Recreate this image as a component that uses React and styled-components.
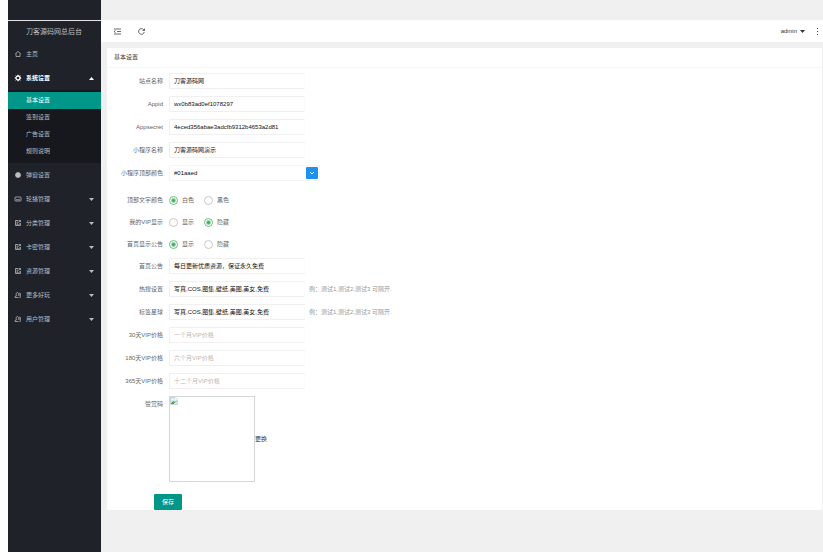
import React, { useState } from "react";
import styled, { createGlobalStyle, css } from "styled-components";

const GlobalStyle = createGlobalStyle`
  *, *::before, *::after { box-sizing: border-box; }
  body {
    margin: 0;
    background: #fff;
    color: #333;
    font: 6px/16px "Liberation Sans", "Noto Sans CJK SC", sans-serif;
  }
  button, input { font: inherit; color: inherit; }
  ul { margin: 0; padding: 0; list-style: none; }
`;

const Page = styled.div`
  display: flex;
  min-height: 100vh;
  padding-left: 8px;
`;

const Sidebar = styled.aside`
  flex: 0 0 93px;
  background: #20222a;
  color: #bcbdbf;
`;

const SidebarTop = styled.div`
  height: 21px;
  border-bottom: 1px solid #e4e4e6;
`;

const Brand = styled.h1`
  margin: 0;
  padding-left: 18px;
  font-size: 7px;
  font-weight: 400;
  line-height: 21px;
`;

const NavLink = styled.a`
  display: flex;
  align-items: center;
  gap: 5px;
  height: 24px;
  padding: 0 7px;
  color: ${(p) => (p.$open ? "#fff" : "inherit")};
  font-weight: ${(p) => (p.$open ? 700 : 400)};
  text-decoration: none;
`;

const NavText = styled.span`
  flex: 1;
`;

const NavIcon = styled.svg`
  width: 6px;
  height: 6px;
  fill: none;
  stroke: currentColor;
  stroke-width: 1.5;
  overflow: visible;
`;

const Caret = styled.svg`
  width: 5px;
  height: 3px;
  fill: currentColor;
`;

const SubMenu = styled.ul`
  padding: 2px 0 3px;
  background: #17181d;
`;

const SubLink = styled.a`
  display: block;
  padding-left: 18px;
  line-height: 17px;
  color: ${(p) => (p.$active ? "#fff" : "#bcbdbf")};
  background: ${(p) => (p.$active ? "#009688" : "transparent")};
  text-decoration: none;
`;

const Main = styled.main`
  flex: 1;
  min-width: 0;
  padding-top: 20px;
  background: #f0f0f0;
`;

const Toolbar = styled.header`
  display: flex;
  align-items: center;
  gap: 17px;
  height: 22px;
  padding: 0 4px 0 13px;
  background: #fff;
`;

const ToolButton = styled.button`
  display: flex;
  align-items: center;
  gap: 3px;
  padding: 0;
  border: 0;
  background: none;
`;

const ToolIcon = styled.svg`
  width: ${(p) => p.$width || 7}px;
  height: 7px;
  fill: none;
  stroke: #444;
`;

const ActionGroup = styled.div`
  display: flex;
  align-items: center;
  gap: 11px;
  margin-left: auto;
`;

const Card = styled.section`
  margin: 6px 1px 42px 6px;
  background: #fff;
`;

const CardTitle = styled.h2`
  margin: 0;
  padding-left: 7px;
  border-bottom: 1px solid #f6f6f6;
  font-size: 6px;
  font-weight: 400;
  line-height: 19px;
`;

const Form = styled.form`
  padding-top: 5px;
`;

const Row = styled.div`
  display: flex;
  align-items: flex-start;
  gap: 6px;
  margin-bottom: ${(p) => (p.$last ? 0 : 7)}px;
`;

const RadioGroup = styled.fieldset`
  display: flex;
  gap: 6px;
  height: 16px;
  min-width: 0;
  margin: 0 0 6px;
  padding: 0;
  border: 0;
`;

const Rows = styled.div`
  padding-top: ${(p) => (p.$spaced ? 4 : 0)}px;
`;

const labelStyle = css`
  flex: 0 0 56px;
  text-align: right;
  color: #666;
  white-space: nowrap;
`;

const Label = styled.label`
  ${labelStyle}
`;

const Caption = styled.span`
  ${labelStyle}
`;

const TextInput = styled.input`
  width: 136px;
  height: 16px;
  padding: 0 4px;
  border: 1px solid #f0f0f0;
  border-right-color: #fbfbfb;
  background: #fff;
  color: #111;
  outline: 0;
  &::placeholder { color: #b8b8b8; opacity: 1; }
`;

const ColorBox = styled.div`
  display: flex;
  align-items: center;
  width: 151px;
  height: 16px;
  padding-right: 1px;
  border: 1px solid #f5f5f5;
`;

const ColorInput = styled.input`
  flex: 1;
  min-width: 0;
  height: 14px;
  padding: 0 4px;
  border: 0;
  color: #111;
  outline: 0;
`;

const ColorButton = styled.button`
  display: flex;
  align-items: center;
  justify-content: center;
  width: 12px;
  height: 12px;
  padding: 0;
  border: 0;
  border-radius: 1px;
  background: #1e90ee;
`;

const Hint = styled.span`
  margin-left: -2px;
  color: #999;
`;

const Option = styled.label`
  display: flex;
  align-items: center;
  gap: 4px;
  width: 29px;
  color: #666;
  white-space: nowrap;
`;

const Radio = styled.input`
  appearance: none;
  flex: none;
  width: 9px;
  height: 9px;
  margin: 0;
  border: 1px solid #c9c9c9;
  border-radius: 50%;
  &:checked {
    border-color: #6cc083;
    background: radial-gradient(circle, #45ad63 0 1px, #fff 3px);
  }
`;

const Preview = styled.div`
  width: 86px;
  height: 86px;
  border: 1px solid #d4d7d7;
`;

const ImageGlyph = styled.svg`
  display: block;
  width: 8px;
  height: 8px;
`;

const Upload = styled.div`
  display: flex;
  align-items: center;
`;

const PlainButton = styled.button`
  padding: 0;
  border: 0;
  background: none;
`;

const SaveButton = styled.button`
  display: block;
  width: 28px;
  height: 16px;
  margin: 12px 0 0 47px;
  padding: 0;
  border: 0;
  border-radius: 1px;
  background: #009688;
  color: #fff;
`;

const iconShapes = {
  home: <path d="M1 5 6 1l5 4M2 4.5V11h8V4.5" />,
  gear: (
    <>
      <circle cx="6" cy="6" r="4" strokeWidth="2.6" />
      <path d="M6-.5V2M6 10v2.5M-.5 6H2M10 6h2.5M1.4 1.4 3 3M9 9l1.6 1.6M10.6 1.4 9 3M3 9l-1.6 1.6" strokeWidth="2" />
    </>
  ),
  dot: <circle cx="6" cy="6" r="5" fill="currentColor" />,
  carousel: (
    <>
      <rect x="0" y="2" width="12" height="8" rx="1" />
      <path d="M2 7.5h8" />
    </>
  ),
  template: (
    <>
      <path d="M7 1H1v10h10V6M3 4h4M3 6.5h3M3 9h4" />
      <path d="M8 1h3v3M11 1 7.5 5M9 7v2" />
    </>
  ),
  user: (
    <path d="M0 11V9l3-1.5C1.500 5 2 1.500 4.500 1S8 4.500 6.500 7.500M0 11h7M8.500 2.500h2V11H9M8 6h2" />
  ),
};

const navItems = [
  { icon: "home", text: "主页" },
  {
    icon: "gear",
    text: "系统设置",
    children: ["基本设置", "签到设置", "广告设置", "规则说明"],
  },
  { icon: "dot", text: "弹窗设置" },
  { icon: "carousel", text: "轮播管理", more: true },
  { icon: "template", text: "分类管理", more: true },
  { icon: "template", text: "卡密管理", more: true },
  { icon: "template", text: "资源管理", more: true },
  { icon: "user", text: "更多好玩", more: true },
  { icon: "user", text: "用户管理", more: true },
];

function Arrow({ up }) {
  return (
    <Caret viewBox="0 0 5 3" aria-hidden="true">
      <path d={up ? "M0 3h5L2.500 0z" : "M0 0h5L2.500 3z"} />
    </Caret>
  );
}

function NavItem({ icon, text, children, more }) {
  return (
    <li>
      <NavLink href="#" $open={Boolean(children)}>
        <NavIcon viewBox="0 0 12 12" aria-hidden="true">{iconShapes[icon]}</NavIcon>
        <NavText>{text}</NavText>
        {(children || more) && <Arrow up={Boolean(children)} />}
      </NavLink>
      {children && (
        <SubMenu>
          {children.map((name, i) => (
            <li key={name}><SubLink href="#" $active={i === 0}>{name}</SubLink></li>
          ))}
        </SubMenu>
      )}
    </li>
  );
}

function Field({ id, label, value, placeholder, hint }) {
  return (
    <Row>
      <Label htmlFor={id}>{label}</Label>
      <TextInput id={id} defaultValue={value} placeholder={placeholder} />
      {hint && <Hint>{hint}</Hint>}
    </Row>
  );
}

function RadioField({ name, label, options, initial }) {
  const [selected, setSelected] = useState(initial);
  return (
    <RadioGroup aria-label={label}>
      <Caption>{label}</Caption>
      {options.map((option, i) => (
        <Option key={option}>
          <Radio
            type="radio"
            name={name}
            checked={selected === i}
            onChange={() => setSelected(i)}
          />
          {option}
        </Option>
      ))}
    </RadioGroup>
  );
}

const hint = "例：测试1,测试2,测试3 可隔开.";
const tags = "写真,COS,图集,壁纸,美图,美女,免费";

export default function App() {
  return (
    <>
      <GlobalStyle />
      <Page>
        <Sidebar>
          <SidebarTop />
          <Brand>刀客源码网总后台</Brand>
          <nav>
            <ul>{navItems.map((item) => <NavItem key={item.text} {...item} />)}</ul>
          </nav>
        </Sidebar>
        <Main>
          <Toolbar>
            <ToolButton type="button" aria-label="收起菜单">
              <ToolIcon viewBox="0 0 14 14" strokeWidth="1.6">
                <path d="M0 2h14M6 7h8M0 12h14M3 5 0 7l3 2" />
              </ToolIcon>
            </ToolButton>
            <ToolButton type="button" aria-label="刷新">
              <ToolIcon viewBox="0 0 14 14" strokeWidth="1.6">
                <path d="M12.500 8A5.700 5.700 0 1 1 11 3l2 2M13 1v4H9" />
              </ToolIcon>
            </ToolButton>
            <ActionGroup>
              <ToolButton type="button">admin <Arrow /></ToolButton>
              <ToolButton type="button" aria-label="更多">
                <ToolIcon $width={3} viewBox="0 0 3 7" strokeWidth="1">
                  <path d="M1 .5h1M1 3.500h1M1 6.500h1" />
                </ToolIcon>
              </ToolButton>
            </ActionGroup>
          </Toolbar>
          <Card>
            <CardTitle>基本设置</CardTitle>
            <Form onSubmit={(e) => e.preventDefault()}>
              <Rows>
                <Field id="site" label="站点名称" value="刀客源码网" />
                <Field id="appid" label="Appid" value="wx0b83ad0ef1078297" />
                <Field id="secret" label="Appsecret" value="4eced356abae3adcfb9312b4653a2d81" />
                <Field id="mini" label="小程序名称" value="刀客源码网演示" />
                <Row>
                  <Label htmlFor="color">小程序顶部颜色</Label>
                  <ColorBox>
                    <ColorInput id="color" defaultValue="#01aaed" />
                    <ColorButton type="button" aria-label="选择颜色">
                      <svg width="6" height="6" viewBox="0 0 6 6" fill="none" stroke="#fff">
                        <path d="m1 2 2 2 2-2" />
                      </svg>
                    </ColorButton>
                  </ColorBox>
                </Row>
              </Rows>
              <Rows $spaced>
                <RadioField name="text" label="顶部文字颜色" options={["白色", "黑色"]} initial={0} />
                <RadioField name="vip" label="我的VIP显示" options={["显示", "隐藏"]} initial={1} />
                <RadioField name="notice" label="首页显示公告" options={["显示", "隐藏"]} initial={0} />
                <Field id="news" label="首页公告" value="每日更新优质资源，保证永久免费" />
                <Field id="hot" label="热搜设置" value={tags} hint={hint} />
                <Field id="tags" label="标签星球" value={tags} hint={hint} />
                <Field id="m1" label="30天VIP价格" placeholder="一个月VIP价格" />
                <Field id="m6" label="180天VIP价格" placeholder="六个月VIP价格" />
                <Field id="m12" label="365天VIP价格" placeholder="十二个月VIP价格" />
                <Row $last>
                  <Caption>赞赏码</Caption>
                  <Upload>
                    <Preview role="img" aria-label="赞赏码">
                      <ImageGlyph viewBox="0 0 16 16">
                        <path d="M1 1h10l4 4v10H1z" fill="#dce8f8" stroke="#a9b1ba" />
                        <path d="M2 13 6 8l4 2 4-3v2L8 14H2z" fill="#4fa447" />
                        <path d="M11 1v4h4M15 8l-8 7" fill="none" stroke="#fff" strokeWidth="1.5" />
                        <circle cx="5" cy="5" r="1.6" fill="#fff" />
                      </ImageGlyph>
                    </Preview>
                    <PlainButton type="button">更换</PlainButton>
                  </Upload>
                </Row>
              </Rows>
              <SaveButton type="submit">保存</SaveButton>
            </Form>
          </Card>
        </Main>
      </Page>
    </>
  );
}
